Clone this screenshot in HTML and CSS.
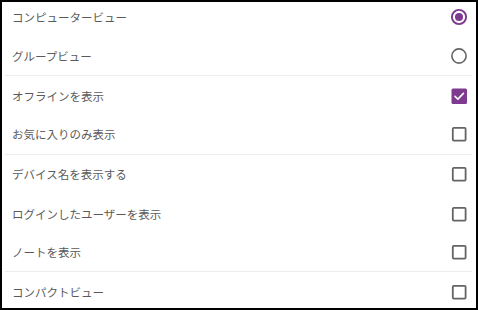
FILE: index.html
```html
<!DOCTYPE html>
<html lang="ja">
<head>
<meta charset="utf-8">
<link rel="stylesheet" href="styles.css">
</head>
<body>
<div class="frame">
  <ul class="list">
    <li class="row">
      <span class="label">コンピュータービュー</span>
      <svg class="ctl" width="18" height="18" viewBox="0 0 18 18"><circle cx="9" cy="9" r="7.1" fill="none" stroke="#7d3a8f" stroke-width="1.9"/><circle cx="9" cy="9" r="4" fill="#7d3a8f"/></svg>
    </li>
    <li class="row sep">
      <span class="label">グループビュー</span>
      <svg class="ctl" width="18" height="18" viewBox="0 0 18 18"><circle cx="9" cy="9" r="7.1" fill="none" stroke="#646464" stroke-width="1.6"/></svg>
    </li>
    <li class="row">
      <span class="label">オフラインを表示</span>
      <svg class="ctl" width="18" height="18" viewBox="0 0 18 18"><rect x="1.5" y="1.5" width="15.5" height="15.5" rx="1.5" fill="#7d3a8f"/><path d="M5 9.4 L7.9 12.1 L13.4 6.4" fill="none" stroke="#fff" stroke-width="1.6" stroke-linecap="round" stroke-linejoin="round"/></svg>
    </li>
    <li class="row sep">
      <span class="label">お気に入りのみ表示</span>
      <svg class="ctl" width="18" height="18" viewBox="0 0 18 18"><rect x="2.8" y="2.8" width="12.8" height="12.8" rx="1" fill="none" stroke="#646464" stroke-width="1.8"/></svg>
    </li>
    <li class="row">
      <span class="label">デバイス名を表示する</span>
      <svg class="ctl" width="18" height="18" viewBox="0 0 18 18"><rect x="2.8" y="2.8" width="12.8" height="12.8" rx="1" fill="none" stroke="#646464" stroke-width="1.8"/></svg>
    </li>
    <li class="row">
      <span class="label">ログインしたユーザーを表示</span>
      <svg class="ctl" width="18" height="18" viewBox="0 0 18 18"><rect x="2.8" y="2.8" width="12.8" height="12.8" rx="1" fill="none" stroke="#646464" stroke-width="1.8"/></svg>
    </li>
    <li class="row sep">
      <span class="label">ノートを表示</span>
      <svg class="ctl" width="18" height="18" viewBox="0 0 18 18"><rect x="2.8" y="2.8" width="12.8" height="12.8" rx="1" fill="none" stroke="#646464" stroke-width="1.8"/></svg>
    </li>
    <li class="row">
      <span class="label">コンパクトビュー</span>
      <svg class="ctl" width="18" height="18" viewBox="0 0 18 18"><rect x="2.8" y="2.8" width="12.8" height="12.8" rx="1" fill="none" stroke="#646464" stroke-width="1.8"/></svg>
    </li>
  </ul>
</div>
</body>
</html>
```
FILE: styles.css
```css
html, body {
  margin: 0;
  padding: 0;
  background: #fff;
}
.frame {
  width: 478px;
  height: 310px;
  box-sizing: border-box;
  border: 2px solid #000;
  overflow: hidden;
  background: #fff;
}
.list {
  list-style: none;
  margin: -4.6px 0 0 0;
  padding: 0;
  display: flex;
  flex-direction: column;
}
.row {
  height: 39.3px;
  box-sizing: border-box;
  display: flex;
  align-items: center;
  justify-content: space-between;
  padding: 0 9px 0 10px;
  margin: 0 4px 0 3px;
  font-family: "Noto Sans CJK JP", "Noto Sans", sans-serif;
  font-size: 11.5px;
  color: #5a5a5a;
}
.row .label {
  margin-left: -3px;
}
.row.sep {
  border-bottom: 1px solid #ececec;
}
.ctl {
  display: block;
  flex: none;
  margin-right: -5px;
}
```
